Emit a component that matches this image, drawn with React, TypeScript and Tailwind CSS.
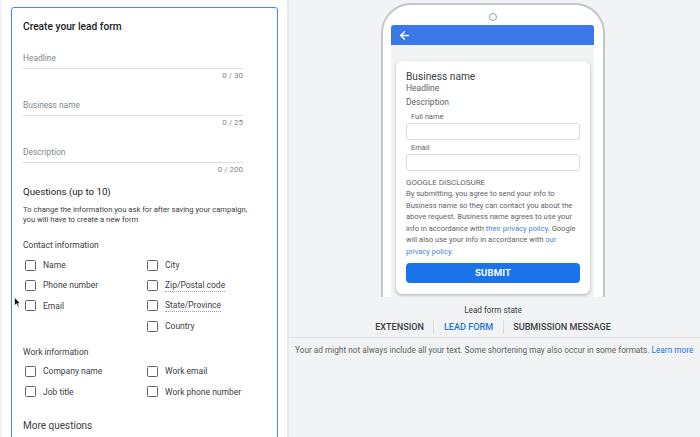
import React from "react";
import { ArrowLeft } from "lucide-react";

function Field({ label, count, first }: { label: string; count: string; first?: boolean }) {
  return (
    <div className={first ? "mt-[18px] w-[220px]" : "mt-[17px] w-[220px]"}>
      <div className="text-[8.4px] leading-[12px] text-[#80868b] pb-[4px] border-b border-[#dadce0]">{label}</div>
      <div className="mt-[1px] text-[8px] leading-[12px] text-[#80868b] text-right">{count}</div>
    </div>
  );
}

function Check({ label, dotted }: { label: string; dotted?: boolean }) {
  return (
    <div className="flex items-center h-[20.3px] gap-[7px]">
      <div className="w-[11px] h-[11px] border-[1.5px] border-[#5f6368] rounded-[1.5px] shrink-0" />
      <span
        className={
          "text-[8.5px] leading-[12px] text-[#3c4043]" +
          (dotted ? " border-b border-dotted border-[#9aa0a6]" : "")
        }
      >
        {label}
      </span>
    </div>
  );
}

export default function App() {
  return (
    <div
      className="relative w-[700px] h-[437px] flex overflow-hidden bg-white"
      style={{ fontFamily: "Roboto, 'Liberation Sans', sans-serif" }}
    >
      {/* Left panel */}
      <div className="w-[289px] h-full shrink-0 bg-white border-r-2 border-[#e8eaed] border-l-2 border-l-[#f1f3f4] pl-[9px] pt-[7px]">
        <div className="w-[267px] h-[500px] border border-[#4a86ef] rounded-t-[3px] pt-[12px] px-[11px]">
          <div className="text-[10.2px] leading-[14px] font-medium text-[#202124]">Create your lead form</div>
          <Field label="Headline" count="0 / 30" first />
          <Field label="Business name" count="0 / 25" />
          <Field label="Description" count="0 / 200" />
          <div className="mt-[9px] text-[9.7px] leading-[14px] text-[#202124]">Questions (up to 10)</div>
          <div className="mt-[6px] text-[7.65px] leading-[10px] text-[#3c4043]">
            To change the information you ask for after saving your campaign,
            <br />
            you will have to create a new form
          </div>
          <div className="mt-[14px] text-[8.5px] leading-[12px] text-[#3c4043]">Contact information</div>
          <div className="mt-[4px] ml-[2px] grid grid-cols-[122px_1fr]">
            <Check label="Name" />
            <Check label="City" />
            <Check label="Phone number" />
            <Check label="Zip/Postal code" dotted />
            <Check label="Email" />
            <Check label="State/Province" dotted />
            <div />
            <Check label="Country" />
          </div>
          <div className="mt-[10px] text-[8.5px] leading-[12px] text-[#3c4043]">Work information</div>
          <div className="mt-[3px] ml-[2px] grid grid-cols-[122px_1fr]">
            <Check label="Company name" />
            <Check label="Work email" />
            <Check label="Job title" />
            <Check label="Work phone number" />
          </div>
          <div className="mt-[17px] text-[10px] leading-[14px] text-[#3c4043]">More questions</div>
        </div>
      </div>

      {/* Right panel */}
      <div className="flex-1 h-full bg-[#f1f3f4] flex flex-col items-stretch">
        <div className="flex flex-col items-center pt-[3px] border-b border-[#e3e5e8] pb-[3px] pr-[3px]">
          {/* Phone */}
          <div className="w-[224px] h-[294px] border-2 border-b-0 border-[#c3c6ca] rounded-t-[30px] bg-white pl-[8px] pr-[9px] pt-[17px] flex flex-col">
            <div className="flex justify-center -mt-[9px] mb-[4px]">
              <div className="w-[8px] h-[8px] rounded-full border border-[#9aa0a6] bg-white" />
            </div>
            <div className="h-[20px] bg-[#3b78e7] rounded-t-[3px] flex items-center pl-[7px] shrink-0">
              <ArrowLeft size={13} color="white" strokeWidth={2.6} />
            </div>
            <div className="flex-1 bg-[#f1f3f4] pt-[16px] pl-[5px] pr-[4px]">
              <div className="bg-white rounded-[6px] shadow-[0_1px_3px_rgba(0,0,0,0.3)] px-[10px] pt-[9px] pb-[11px]">
                <div className="text-[10.2px] leading-[13px] text-[#3c4043]">Business name</div>
                <div className="text-[8.5px] leading-[11px] text-[#5f6368]">Headline</div>
                <div className="mt-[3px] text-[8.5px] leading-[11px] text-[#5f6368]">Description</div>
                <div className="mt-[3.5px] pl-[5px] text-[7.5px] leading-[10px] text-[#5f6368]">Full name</div>
                <div className="mt-[1px] h-[17px] border border-[#dadce0] rounded-[3px]" />
                <div className="mt-[3px] pl-[5px] text-[7.5px] leading-[10px] text-[#5f6368]">Email</div>
                <div className="mt-[1px] h-[17px] border border-[#dadce0] rounded-[3px]" />
                <div className="mt-[6.5px] text-[8px] leading-[11px] text-[#5f6368]">GOOGLE DISCLOSURE</div>
                <div className="text-[7.55px] leading-[11.6px] text-[#5f6368]">
                  By submitting, you agree to send your info to Business name so they can contact you about the above
                  request. Business name agrees to use your info in accordance with{" "}
                  <span className="text-[#4a7fe0]">their privacy policy</span>. Google will also use your info in
                  accordance with <span className="text-[#4a7fe0]">our privacy policy</span>.
                </div>
                <div className="mt-[5.5px] h-[20px] rounded-[4px] bg-[#1a73e8] flex items-center justify-center text-white text-[9.5px] font-bold tracking-[0.2px]">
                  SUBMIT
                </div>
              </div>
            </div>
          </div>
          <div className="mt-[7.5px] text-[8.2px] leading-[11px] text-[#3c4043]">Lead form state</div>
          <div className="mt-[4px] flex items-center text-[9.1px] leading-[12px] font-medium text-[#3c4043]">
            <span className="pr-[9px]">EXTENSION</span>
            <span className="w-px h-[14px] bg-[#dadce0]" />
            <span className="px-[10px] text-[#1a73e8]">LEAD FORM</span>
            <span className="w-px h-[14px] bg-[#dadce0]" />
            <span className="pl-[9px]">SUBMISSION MESSAGE</span>
          </div>
        </div>
        <div className="pl-[6px] pt-[6px] text-[8.25px] leading-[12px] text-[#5f6368] whitespace-nowrap">
          Your ad might not always include all your text. Some shortening may also occur in some formats.{" "}
          <span className="text-[#1a73e8]">Learn more</span>
        </div>
      </div>

      {/* mouse cursor */}
      <svg className="absolute left-[14px] top-[297px]" width="7" height="11" viewBox="0 0 7 11">
        <path d="M0.5 0.5 L0.5 8.5 L2.5 6.8 L4 10 L5.2 9.4 L3.8 6.3 L6.3 6.3 Z" fill="#111" stroke="#fff" strokeWidth="0.6" />
      </svg>
    </div>
  );
}
